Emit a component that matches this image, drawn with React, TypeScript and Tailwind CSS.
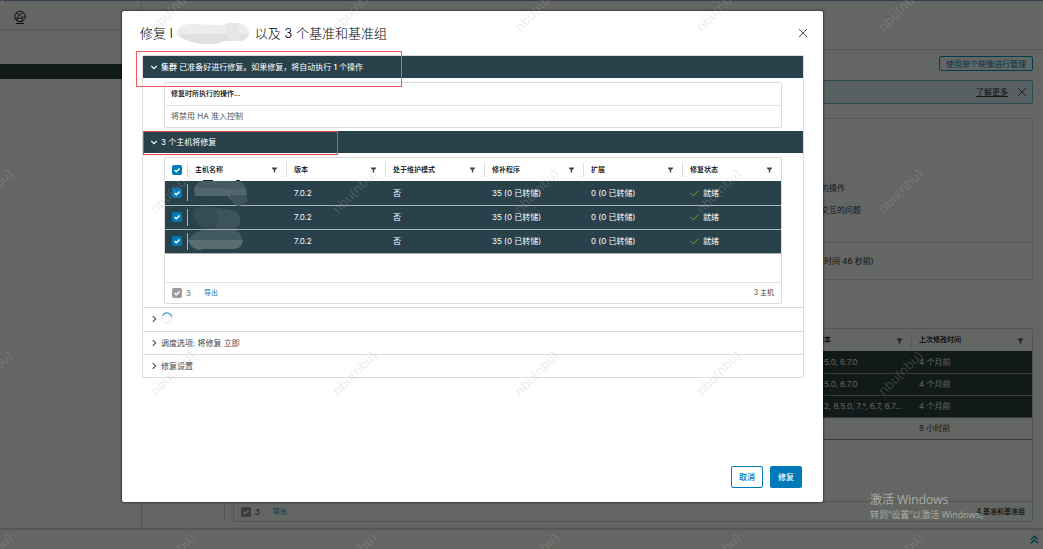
import type { ReactNode } from "react";
import clsx from "clsx";

const hostColumns = ["主机名称", "版本", "处于维护模式", "修补程序", "扩展", "修复状态"];

const hosts = [
  { version: "7.0.2", maintenance: "否", patches: "35 (0 已转储)", extensions: "0 (0 已转储)", status: "就绪" },
  { version: "7.0.2", maintenance: "否", patches: "35 (0 已转储)", extensions: "0 (0 已转储)", status: "就绪" },
  { version: "7.0.2", maintenance: "否", patches: "35 (0 已转储)", extensions: "0 (0 已转储)", status: "就绪" },
];

const baselines = [
  { version: "6.5.0, 6.7.0", modified: "4 个月前", selected: true },
  { version: "6.5.0, 6.7.0", modified: "4 个月前", selected: true },
  { version: "6.2, 6.5.0, 7.*, 6.7, 6.7...", modified: "4 个月前", selected: true },
  { version: "", modified: "8 小时前", selected: false },
];

const FilterIcon = () => (
  <svg viewBox="0 0 7 7" className="size-[7px] shrink-0" aria-hidden="true">
    <path d="M1 1.4h5v1L4.2 3.9V6.6H2.8V3.9L1 2.4z" fill="#454545" />
  </svg>
);

const CloseIcon = () => (
  <svg viewBox="0 0 10 10" className="size-[10px]" fill="none" stroke="#565656" aria-hidden="true">
    <path d="M1 1l8 8M9 1L1 9" />
  </svg>
);

const Chevron = ({ open }: { open?: boolean }) => (
  <svg
    viewBox="0 0 8 8"
    className="size-2 shrink-0"
    fill="none"
    stroke={open ? "#fff" : "#565656"}
    strokeWidth="1.2"
    aria-hidden="true"
  >
    <path d={open ? "M1.2 2.8L4 5.6l2.8-2.8" : "M2.8 1.2L5.6 4 2.8 6.8"} />
  </svg>
);

const Checkbox = ({ label, muted }: { label: string; muted?: boolean }) => (
  <span className="relative block size-[10px] shrink-0">
    <input
      type="checkbox"
      defaultChecked
      disabled={muted}
      aria-label={label}
      className={clsx("block size-[10px] appearance-none rounded-xs", muted ? "bg-[#9a9a9a]" : "bg-[#0079b8]")}
    />
    <svg
      viewBox="0 0 10 10"
      className="pointer-events-none absolute inset-0 size-[10px]"
      fill="none"
      stroke="#fff"
      strokeWidth="1.4"
      aria-hidden="true"
    >
      <path d="M2.5 5l1.8 1.8 3.3-3.4" />
    </svg>
  </span>
);

const ColumnHead = ({ children }: { children: ReactNode }) => (
  <div className="flex h-[15px] items-center justify-between border-l border-[#dedede] pr-2 pl-[7px] text-[7px] font-medium text-black">
    {children}
    <FilterIcon />
  </div>
);

const Section = ({ title, open, children }: { title: ReactNode; open?: boolean; children?: ReactNode }) => (
  <section className="border-[#dcdcdc] not-first:border-t">
    <h2>
      <button
        type="button"
        aria-expanded={!!open}
        className={clsx(
          "flex min-h-[22px] w-full items-center gap-[3px] pl-[7px] text-left",
          open ? "bg-[#29414a] text-white" : "text-[#454545]"
        )}
      >
        <Chevron open={open} />
        {title}
      </button>
    </h2>
    {children}
  </section>
);

/* Everything behind the dialog */
const Background = () => (
  <div className="flex h-screen flex-col border-t border-[#8f9fbf] bg-[#f8fff4]">
    <div className="flex min-h-0 flex-1">
      <aside className="w-[142px] shrink-0 border-r border-[#d5dad2]">
        <div className="flex h-[29px] items-center border-b border-[#d5dad2] pt-1 pl-[13px]">
          <svg viewBox="0 0 14 15" className="h-[15px] w-[14px]" fill="none" stroke="#222" aria-hidden="true">
            <circle cx="7" cy="6.5" r="5.3" strokeWidth="1" />
            <path
              d="M3 3.2l3.2 1.3L10.8 3M6.2 4.5L3.6 8.7l-1.5-1M6.2 4.5L9.6 8l2.4-2M3.6 8.7L9.6 8l-.8 3.2M3.6 8.7l1.2 2.4"
              strokeWidth=".8"
            />
            <path d="M3 13.5h8" />
          </svg>
        </div>
        <div className="mt-[34px] h-[15px] bg-[#2b4140]" />
      </aside>
      <div className="flex min-w-0 flex-1 flex-col">
        <header className="h-[49px] shrink-0 border-b border-[#d5dad2]" />
        <div className="flex min-h-0 flex-1 pb-[6px]">
          <nav className="w-[83px] shrink-0 border-r border-[#d5dad2]" />
          <main className="flex min-w-0 flex-1 flex-col pt-[6px] pr-[10px] pl-2">
            <button
              type="button"
              className="h-[15px] self-end rounded-xs border border-[#0095d3] px-[6px] text-[#0088d0]"
            >
              使用单个映像进行管理
            </button>
            <div className="mt-[9px] flex h-6 shrink-0 items-center justify-end gap-[9px] rounded-xs border border-[#6fb8d0] bg-[#dcf0f6] pr-[5px]">
              <a href="#more" className="text-[#333] underline underline-offset-1">
                了解更多
              </a>
              <button type="button" aria-label="关闭提示">
                <CloseIcon />
              </button>
            </div>
            <section className="mt-[14px] h-[162px] shrink-0 rounded-xs border border-[#dadfd7]">
              <div className="h-[124px] border-b border-[#dadfd7] pt-[58px]">
                <ul className="ml-auto w-[211px] leading-[22px] text-[#454545]">
                  <li>的操作</li>
                  <li>交互的问题</li>
                </ul>
              </div>
              <p className="ml-auto w-[208px] leading-[36px] text-[#333]">时间 46 秒前)</p>
            </section>
            <div className="mt-12 flex min-h-0 flex-1 flex-col rounded-xs border border-[#cfd4cc]">
              <table className="w-full table-fixed border-collapse text-left">
                <colgroup>
                  <col />
                  <col className="w-[102px]" />
                  <col className="w-[121px]" />
                </colgroup>
                <thead>
                  <tr className="h-[22px]">
                    <th />
                    <th className="p-0">
                      <ColumnHead>版本</ColumnHead>
                    </th>
                    <th className="p-0">
                      <ColumnHead>上次修改时间</ColumnHead>
                    </th>
                  </tr>
                </thead>
                <tbody>
                  {baselines.map((row, i) => (
                    <tr
                      key={i}
                      className={clsx(
                        "h-[22px] border-b border-[#8a9690]",
                        row.selected ? "bg-[#2b4140] text-[#eee]" : "text-[#454545]"
                      )}
                    >
                      <td />
                      <td className="overflow-hidden p-0 pl-2 whitespace-nowrap">{row.version}</td>
                      <td className="p-0 pl-2">{row.modified}</td>
                    </tr>
                  ))}
                </tbody>
              </table>
              <div className="mt-auto flex h-5 shrink-0 items-center border-t border-[#cfd4cc] pr-[7px] pl-[7px] text-[7px]">
                <Checkbox label="已选择基准" muted />
                <span className="ml-1 text-[8px] text-[#454545]">3</span>
                <a href="#export" className="ml-[13px] text-[#0095d3]">
                  导出
                </a>
                <span className="ml-auto text-black">4 基准和基准组</span>
              </div>
            </div>
          </main>
        </div>
      </div>
    </div>
    <footer className="flex h-[21px] shrink-0 items-center justify-end border-t-2 border-[#d5dad2] pr-1">
      <button type="button" aria-label="展开任务">
        <svg viewBox="0 0 9 9" className="size-[9px]" fill="none" stroke="#0095d3" strokeWidth="1.4" aria-hidden="true">
          <path d="M1 4.5L4.5 1.2 8 4.5M1 8.2l3.5-3.3L8 8.2" />
        </svg>
      </button>
    </footer>
  </div>
);

const HostTable = () => (
  <div className="mx-[21px] mt-1 mb-[3px] rounded-xs border border-[#dcdcdc]">
    <table className="w-full table-fixed border-collapse text-left">
      <thead>
        <tr className="h-[23px]">
          <th className="w-[22px] p-0 pl-[7px]">
            <Checkbox label="选择所有主机" />
          </th>
          {hostColumns.map((name) => (
            <th key={name} className="p-0">
              <ColumnHead>{name}</ColumnHead>
            </th>
          ))}
        </tr>
      </thead>
      <tbody>
        {hosts.map((host, i) => (
          <tr key={i} className="h-6 border-b border-[#a9b3b7] bg-[#29414a] text-white">
            <td className="p-0 pl-[7px]">
              <Checkbox label={`选择主机 ${i + 1}`} />
            </td>
            <td className="relative p-0">
              <div className="h-[17px] border-l border-[#a9b3b7]" />
              {/* Scrubbed host names */}
              {i === 0 && (
                <svg
                  viewBox="0 0 64 76"
                  className="pointer-events-none absolute -top-[2px] left-0 h-[76px] w-16"
                  aria-hidden="true"
                >
                  <path d="M16 1.5h10M49 1.5h4" stroke="#1c2628" />
                  <path d="M7 10q2-8 12-8h33q7 3 8 14v5q-1 4-10 2-6 0-9-6H8z" fill="#52666d" />
                  <path d="M8 9q3-7 11-7h33q5 2 6 8z" fill="#465c64" />
                  <path d="M44 16h16v3q-2 7-9 8-7-2-8-9z" fill="#3c535b" />
                  <path d="M6 36q0-8 10-9l28 4q9 2 9 8v5q-1 6-8 6H22q-12-2-16-14z" fill="#344c55" />
                  <path d="M30 29l14 2q9 2 9 8v5q-1 6-8 6H30z" fill="#3c535b" />
                  <path d="M1 62q6-11 18-11h28q7 1 9 12z" fill="#435961" />
                  <path d="M1 61h55q-1 9-10 9H16q-4 2-7 0-6-2-8-9z" fill="#596c72" />
                </svg>
              )}
            </td>
            <td className="p-0 pl-2">{host.version}</td>
            <td className="p-0 pl-2">{host.maintenance}</td>
            <td className="p-0 pl-2">{host.patches}</td>
            <td className="p-0 pl-2">{host.extensions}</td>
            <td className="p-0 pl-2">
              <span className="flex items-center gap-1">
                <svg viewBox="0 0 9 8" className="h-2 w-[9px]" fill="none" stroke="#60b515" aria-hidden="true">
                  <path d="M.8 4.2l2.6 2.6L8.4 1.6" />
                </svg>
                {host.status}
              </span>
            </td>
          </tr>
        ))}
      </tbody>
    </table>
    <div className="mt-[28px] flex h-[21px] items-center border-t border-[#e4e4e4] px-[7px] text-[7px]">
      <Checkbox label="已选择主机" muted />
      <span className="ml-1 text-[8px] text-[#737373]">3</span>
      <a href="#export" className="ml-[13px] text-[#0079b8]">
        导出
      </a>
      <span className="ml-auto text-[#454545]">3 主机</span>
    </div>
  </div>
);

const RemediateDialog = () => (
  <div
    role="dialog"
    aria-modal="true"
    aria-labelledby="dialog-title"
    className="flex flex-1 flex-col rounded-xs bg-white pr-[19px] pb-[14px] pl-5 shadow-[0_0_2px_1px_rgba(0,0,0,0.4)]"
  >
    <div className="-mr-1 -ml-[2px] flex h-11 shrink-0 items-center justify-between">
      <h1 id="dialog-title" className="flex items-center text-[13px] font-light text-black">
        修复 l
        <svg viewBox="0 0 76 22" className="mr-[6px] h-[22px] w-[76px]" aria-hidden="true">
          <path d="M4 9q3-6 12-7l34 1 4-2h13q8 3 9 8v3q-2 6-9 7H50q-5 4-20 3-18-2-26-9z" fill="#ececec" />
          <path d="M7 12h69q-2 6-9 7H50q-5 4-20 3-16-2-23-8z" fill="#e0e0e0" />
          <path d="M54 1h12v18H54z" fill="#e6e6e6" />
        </svg>
        以及 3 个基准和基准组
      </h1>
      <button type="button" aria-label="关闭">
        <CloseIcon />
      </button>
    </div>

    <div className="rounded-xs border border-[#dcdcdc]">
      <div className="relative">
        <Section
          open
          title={
            <span>
              <b className="font-medium">集群</b> 已准备好进行修复。如果修复，将自动执行 <b className="font-medium">1</b> 个操作
            </span>
          }
        >
          <table className="mx-[21px] mt-1 mb-[3px] block rounded-xs border border-[#dcdcdc] text-left">
            <thead className="block">
              <tr className="block h-[22px]">
                <th className="px-[6px] py-0 text-[7px] leading-[22px] font-medium text-black">
                  修复时所执行的操作...
                </th>
              </tr>
            </thead>
            <tbody className="block border-t border-[#e4e4e4]">
              <tr className="block h-[21px]">
                <td className="px-[6px] py-0 leading-[21px] text-[#565656]">将禁用 HA 准入控制</td>
              </tr>
            </tbody>
          </table>
        </Section>
        <div className="pointer-events-none absolute -top-[5px] -left-[7px] h-9 w-[266px] border border-[#f25a5a]" />
      </div>
      <div className="relative">
        <Section open title="3 个主机将修复">
          <HostTable />
        </Section>
        <div className="pointer-events-none absolute top-0 left-0 h-6 w-[195px] border border-[#e04848]" />
      </div>
      <div className="border-t border-[#dcdcdc]">
        <Section
          title={
            <span className="h-[23px] pt-1">
              <svg viewBox="0 0 12 12" className="size-3" fill="none" role="img" aria-label="正在加载">
                <circle cx="6" cy="6" r="5" stroke="#e6e6e6" />
                <path d="M1.6 3.6A5 5 0 0 1 10.8 4.6" stroke="#3a9bd0" strokeWidth="1.2" />
              </svg>
            </span>
          }
        />
        <Section title="调度选项: 将修复 立即" />
        <Section title="修复设置" />
      </div>
    </div>

    <div className="mt-auto flex justify-end gap-[7px] pr-[2px] text-[8px] font-medium">
      <button type="button" className="h-[22px] w-8 rounded-xs border border-[#0079b8] text-[#0079b8]">
        取消
      </button>
      <button type="button" className="h-[22px] w-8 rounded-xs bg-[#0079b8] text-white">
        修复
      </button>
    </div>
  </div>
);

const Watermark = () => (
  <div className="pointer-events-none absolute inset-0 overflow-hidden" aria-hidden="true">
    <div className="-mt-[82px] -ml-[101px] grid auto-rows-[182px] grid-cols-[repeat(6,182px)] place-items-center font-['Noto_Sans'] text-[13px] text-[#b0b0b0]/25">
      {Array.from({ length: 24 }, (_, i) => (
        <span key={i} className="-rotate-45">
          nbu(nbu)
        </span>
      ))}
    </div>
  </div>
);

const App = () => (
  <div className="relative h-screen overflow-hidden font-['Inter','Noto_Sans_CJK_SC',sans-serif] text-[8px] leading-3">
    <Background />
    <div className="absolute inset-0 flex bg-black/60 pt-[11px] pr-[220px] pb-[47px] pl-[122px]">
      <RemediateDialog />
    </div>
    <Watermark />
    <div className="pointer-events-none absolute right-[54px] bottom-[28px] font-['Open_Sans','Noto_Sans_CJK_SC',sans-serif] text-[#a9aca8]">
      <p className="text-[12px] leading-4">激活 Windows</p>
      <p className="text-[9px] leading-[13px]">转到“设置”以激活 Windows。</p>
    </div>
  </div>
);

export default App;
